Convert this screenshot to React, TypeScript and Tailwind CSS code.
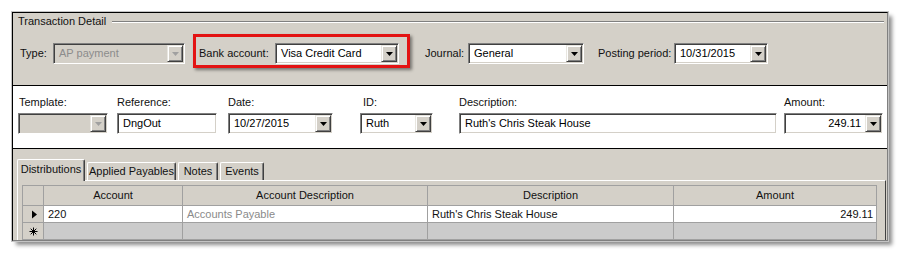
import React from 'react'

const sunken =
  'border border-t-[#808080] border-l-[#808080] border-r-white border-b-white shadow-[inset_1px_1px_0_#404040,inset_-1px_-1px_0_#d4d0c8]'
const raised =
  'border border-t-[#e8e6e0] border-l-[#e8e6e0] border-r-[#404040] border-b-[#404040] shadow-[inset_1px_1px_0_#ffffff,inset_-1px_-1px_0_#808080]'

const Arrow: React.FC<{ disabled?: boolean }> = ({ disabled }) => (
  <svg width="7" height="4" viewBox="0 0 7 4">
    <path d="M0 0h7L3.5 4z" fill={disabled ? '#a0a0a0' : '#000'} />
  </svg>
)

interface ComboProps {
  width: string
  value: string
  disabled?: boolean
  right?: boolean
}

const Combo: React.FC<ComboProps> = ({ width, value, disabled, right }) => (
  <div
    className={`flex h-[21px] items-stretch p-[1px] ${sunken} ${width} ${disabled ? 'bg-[#d4d0c8]' : 'bg-white'}`}
  >
    <span
      className={`flex-1 truncate leading-[17px] ${right ? 'pr-[4px] text-right' : 'pl-[4px]'} ${disabled ? 'text-[#8c8c8c]' : 'text-black'}`}
    >
      {value}
    </span>
    <div className={`flex w-[16px] items-center justify-center bg-[#d4d0c8] ${raised}`}>
      <Arrow disabled={disabled} />
    </div>
  </div>
)

const TextBox: React.FC<{ width: string; value: string }> = ({ width, value }) => (
  <div className={`h-[21px] bg-white pl-[5px] leading-[19px] text-black ${sunken} ${width}`}>{value}</div>
)

const Field: React.FC<{ label: string; labelPad?: string; children: React.ReactNode; className?: string }> = ({
  label,
  labelPad,
  children,
  className,
}) => (
  <div className={`flex flex-col ${className ?? ''}`}>
    <span className={`h-[13px] leading-[13px] ${labelPad ?? ''}`}>{label}</span>
    <div className="mt-[4px]">{children}</div>
  </div>
)

const tabs = ['Distributions', 'Applied Payables', 'Notes', 'Events']
const tabWidths = ['w-[68px]', 'w-[89px]', 'w-[40px]', 'w-[44px]']

const App: React.FC = () => {
  return (
    <div className="h-screen w-screen bg-white pl-[12px] pt-[12px] font-['Liberation_Sans',Arial,sans-serif] text-[11px] text-[#111]">
      <div className="flex h-[229px] w-[876px] flex-col overflow-hidden border border-t-black border-l-black border-r-[#808080] border-b-[#808080] bg-[#d4d0c8] shadow-[0_0_0_1px_#c4c4c4,4px_4px_4px_rgba(0,0,0,0.45)]">
        {/* group box */}
        <div className="h-[72px] shrink-0">
          <div className="mt-[2px] flex h-[13px] items-center">
            <span className="ml-[5px] leading-[13px]">Transaction Detail</span>
            <div className="ml-[6px] mr-[3px] h-[2px] flex-1 border-t border-b border-t-[#808080] border-b-white" />
          </div>
          <div className="mt-[6px] flex h-[34px] items-start pl-[7px]">
            <span className="mt-[9px] h-[21px] w-[33px] leading-[21px]">Type:</span>
            <div className="mt-[9px]">
              <Combo width="w-[132px]" value="AP payment" disabled />
            </div>
            <div className="ml-[8px] flex h-[34px] w-[217px] items-start border-[3px] border-[#e31313] pl-[3px] pt-[6px] shadow-[2px_2px_3px_rgba(0,0,0,0.45)]">
              <span className="h-[21px] w-[76px] leading-[21px]">Bank account:</span>
              <Combo width="w-[124px]" value="Visa Credit Card" />
            </div>
            <span className="ml-[15px] mt-[9px] h-[21px] w-[43px] leading-[21px]">Journal:</span>
            <div className="mt-[9px]">
              <Combo width="w-[116px]" value="General" />
            </div>
            <span className="ml-[14px] mt-[9px] h-[21px] w-[76px] leading-[21px]">Posting period:</span>
            <div className="mt-[9px]">
              <Combo width="w-[94px]" value="10/31/2015" />
            </div>
          </div>
        </div>

        {/* header fields */}
        <div className="flex h-[64px] shrink-0 items-start border-y border-black bg-white pl-[5px] pt-[10px]">
          <Field label="Template:" labelPad="pl-[1px]">
            <Combo width="w-[90px]" value="" disabled />
          </Field>
          <Field label="Reference:" className="ml-[9px]">
            <TextBox width="w-[100px]" value="DngOut" />
          </Field>
          <Field label="Date:" className="ml-[11px]">
            <Combo width="w-[105px]" value="10/27/2015" />
          </Field>
          <Field label="ID:" labelPad="pl-[3px]" className="ml-[27px]">
            <Combo width="w-[73px]" value="Ruth" />
          </Field>
          <Field label="Description:" className="ml-[26px]">
            <TextBox width="w-[318px]" value="Ruth's Chris Steak House" />
          </Field>
          <Field label="Amount:" className="ml-[7px]">
            <Combo width="w-[99px]" value="249.11" right />
          </Field>
        </div>

        {/* tabs */}
        <div className="flex-1 pt-[10px]">
          <div className="flex h-[21px] items-end pl-[4px]">
            {tabs.map((t, i) => (
              <div
                key={t}
                className={`flex items-center justify-center rounded-t-[2px] border-t border-l border-r border-t-white border-l-white border-r-[#404040] bg-[#d4d0c8] shadow-[inset_-1px_0_0_#808080] ${tabWidths[i]} ${
                  i === 0 ? 'relative z-10 -mb-[1px] h-[22px] pb-[3px]' : 'ml-[2px] h-[18px]'
                }`}
              >
                {t}
              </div>
            ))}
          </div>
          <div className="ml-[4px] h-[70px] w-[869px] border-t border-l border-r border-t-white border-l-white border-r-[#404040] pl-[4px] pt-[4px]">
            <table className="w-[854px] table-fixed border-collapse">
              <colgroup>
                <col className="w-[21px]" />
                <col className="w-[139px]" />
                <col className="w-[245px]" />
                <col className="w-[246px]" />
                <col className="w-[203px]" />
              </colgroup>
              <thead>
                <tr className="h-[20px]">
                  <th className="border border-[#a0a0a0] bg-[#d4d0c8]" />
                  <th className="border border-[#a0a0a0] bg-[#d4d0c8] font-normal">Account</th>
                  <th className="border border-[#a0a0a0] bg-[#d4d0c8] font-normal">Account Description</th>
                  <th className="border border-[#a0a0a0] bg-[#d4d0c8] font-normal">Description</th>
                  <th className="border border-[#a0a0a0] bg-[#d4d0c8] font-normal">Amount</th>
                </tr>
              </thead>
              <tbody>
                <tr className="h-[17px] bg-white">
                  <td className="border border-[#a0a0a0] bg-[#d4d0c8]">
                    <svg width="21" height="15" viewBox="0 0 21 15" className="block">
                      <path d="M9 3.5l5 4-5 4z" fill="#000" />
                    </svg>
                  </td>
                  <td className="border border-[#a0a0a0] pl-[4px] leading-[15px]">220</td>
                  <td className="border border-[#a0a0a0] pl-[4px] leading-[15px] text-[#8a8a8a]">Accounts Payable</td>
                  <td className="border border-[#a0a0a0] pl-[4px] leading-[15px]">Ruth's Chris Steak House</td>
                  <td className="border border-[#a0a0a0] pr-[3px] text-right leading-[15px]">249.11</td>
                </tr>
                <tr className="h-[17px] bg-[#cbcbcb]">
                  <td className="border border-[#a0a0a0] bg-[#d4d0c8]">
                    <svg width="21" height="15" viewBox="0 0 21 15" className="block">
                      <g stroke="#000" strokeWidth="1">
                        <path d="M10.5 3.5v8M6.5 7.5h8M7.7 4.7l5.6 5.6M13.3 4.7l-5.6 5.6" />
                      </g>
                    </svg>
                  </td>
                  <td className="border border-[#a0a0a0]" />
                  <td className="border border-[#a0a0a0]" />
                  <td className="border border-[#a0a0a0]" />
                  <td className="border border-[#a0a0a0]" />
                </tr>
              </tbody>
            </table>
          </div>
        </div>
      </div>
    </div>
  )
}

export default App
